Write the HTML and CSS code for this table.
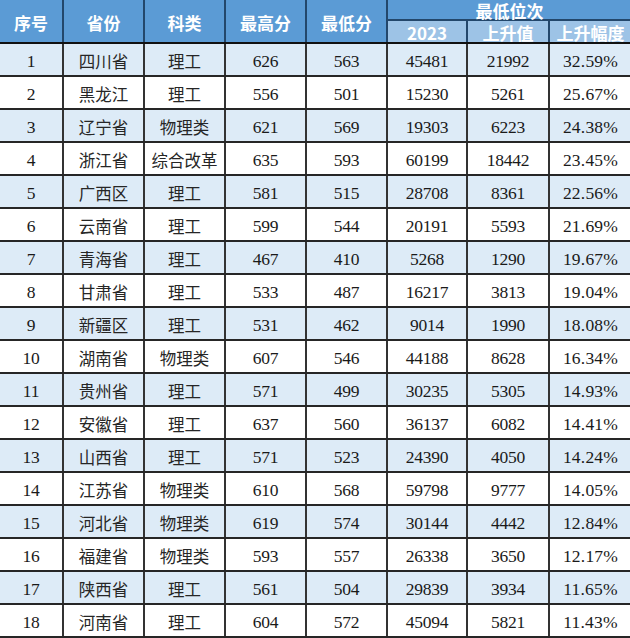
FILE: index.html
```html
<!DOCTYPE html>
<html lang="zh-CN">
<head>
<meta charset="utf-8">
<title>最低位次</title>
<link rel="stylesheet" href="styles.css">
</head>
<body>
<table class="sheet">
  <colgroup>
    <col class="c-no"><col class="c-prov"><col class="c-type"><col class="c-max"><col class="c-min"><col class="c-rank"><col class="c-up"><col class="c-pct">
  </colgroup>
  <thead>
    <tr class="h-top">
      <th rowspan="2">序号</th>
      <th rowspan="2">省份</th>
      <th rowspan="2">科类</th>
      <th rowspan="2">最高分</th>
      <th rowspan="2">最低分</th>
      <th colspan="3" class="h-group">最低位次</th>
    </tr>
    <tr class="h-sub">
      <th>2023</th>
      <th>上升值</th>
      <th>上升幅度</th>
    </tr>
  </thead>
  <tbody>
    <tr><td>1</td><td class="cn">四川省</td><td class="cn">理工</td><td>626</td><td>563</td><td>45481</td><td>21992</td><td class="pct">32.59%</td></tr>
    <tr><td>2</td><td class="cn">黑龙江</td><td class="cn">理工</td><td>556</td><td>501</td><td>15230</td><td>5261</td><td class="pct">25.67%</td></tr>
    <tr><td>3</td><td class="cn">辽宁省</td><td class="cn">物理类</td><td>621</td><td>569</td><td>19303</td><td>6223</td><td class="pct">24.38%</td></tr>
    <tr><td>4</td><td class="cn">浙江省</td><td class="cn">综合改革</td><td>635</td><td>593</td><td>60199</td><td>18442</td><td class="pct">23.45%</td></tr>
    <tr><td>5</td><td class="cn">广西区</td><td class="cn">理工</td><td>581</td><td>515</td><td>28708</td><td>8361</td><td class="pct">22.56%</td></tr>
    <tr><td>6</td><td class="cn">云南省</td><td class="cn">理工</td><td>599</td><td>544</td><td>20191</td><td>5593</td><td class="pct">21.69%</td></tr>
    <tr><td>7</td><td class="cn">青海省</td><td class="cn">理工</td><td>467</td><td>410</td><td>5268</td><td>1290</td><td class="pct">19.67%</td></tr>
    <tr><td>8</td><td class="cn">甘肃省</td><td class="cn">理工</td><td>533</td><td>487</td><td>16217</td><td>3813</td><td class="pct">19.04%</td></tr>
    <tr><td>9</td><td class="cn">新疆区</td><td class="cn">理工</td><td>531</td><td>462</td><td>9014</td><td>1990</td><td class="pct">18.08%</td></tr>
    <tr><td>10</td><td class="cn">湖南省</td><td class="cn">物理类</td><td>607</td><td>546</td><td>44188</td><td>8628</td><td class="pct">16.34%</td></tr>
    <tr><td>11</td><td class="cn">贵州省</td><td class="cn">理工</td><td>571</td><td>499</td><td>30235</td><td>5305</td><td class="pct">14.93%</td></tr>
    <tr><td>12</td><td class="cn">安徽省</td><td class="cn">理工</td><td>637</td><td>560</td><td>36137</td><td>6082</td><td class="pct">14.41%</td></tr>
    <tr><td>13</td><td class="cn">山西省</td><td class="cn">理工</td><td>571</td><td>523</td><td>24390</td><td>4050</td><td class="pct">14.24%</td></tr>
    <tr><td>14</td><td class="cn">江苏省</td><td class="cn">物理类</td><td>610</td><td>568</td><td>59798</td><td>9777</td><td class="pct">14.05%</td></tr>
    <tr><td>15</td><td class="cn">河北省</td><td class="cn">物理类</td><td>619</td><td>574</td><td>30144</td><td>4442</td><td class="pct">12.84%</td></tr>
    <tr><td>16</td><td class="cn">福建省</td><td class="cn">物理类</td><td>593</td><td>557</td><td>26338</td><td>3650</td><td class="pct">12.17%</td></tr>
    <tr><td>17</td><td class="cn">陕西省</td><td class="cn">理工</td><td>561</td><td>504</td><td>29839</td><td>3934</td><td class="pct">11.65%</td></tr>
    <tr><td>18</td><td class="cn">河南省</td><td class="cn">理工</td><td>604</td><td>572</td><td>45094</td><td>5821</td><td class="pct">11.43%</td></tr>
  </tbody>
</table>
</body>
</html>
```

FILE: styles.css
```css
html, body {
  margin: 0;
  padding: 0;
  background: #ffffff;
  overflow: hidden;
}

.sheet {
  border-collapse: collapse;
  table-layout: fixed;
  width: 631px;
}

.c-no { width: 63px; }
.c-prov { width: 81px; }
.c-type { width: 81px; }
.c-max { width: 81px; }
.c-min { width: 81px; }
.c-rank { width: 80px; }
.c-up { width: 82px; }
.c-pct { width: 82px; }

.sheet th {
  padding: 0;
  color: #ffffff;
  font-family: "Noto Sans CJK SC", "Noto Sans", sans-serif;
  font-weight: 700;
  font-size: 17px;
  line-height: 20px;
  text-align: center;
  background: #5b9bd5;
  border-left: 2px solid #23476b;
  border-bottom: 2px solid #111111;
}

.sheet th:first-child {
  border-left: 0;
}

.h-top {
  height: 20px;
}

.h-top th {
  padding-top: 4px;
}

.h-top .h-group {
  font-size: 17px;
  line-height: 17px;
  padding-top: 2px;
  vertical-align: top;
  border-bottom: 2px solid #23476b;
}

.h-sub {
  height: 23px;
}

.h-sub th {
  background: #9dc3e6;
  font-size: 17px;
  padding-top: 2px;
  line-height: 19px;
}

.h-sub th:first-child {
  border-left: 2px solid #23476b;
}

.sheet td {
  height: 29px;
  padding: 2px 0 0 0;
  text-align: center;
  color: #1a1a1a;
  font-family: "Liberation Serif", "Noto Sans CJK SC", serif;
  font-size: 17.5px;
  letter-spacing: -0.3px;
  line-height: 20px;
  border-left: 2px solid #333333;
  border-bottom: 2px solid #262626;
}

.sheet td:first-child {
  border-left: 0;
}

.sheet td.cn {
  font-family: "Noto Sans CJK SC", sans-serif;
  font-size: 16.5px;
  letter-spacing: 0;
  color: #262626;
}

.sheet td.pct {
  letter-spacing: 0.2px;
}

.sheet tbody tr:nth-child(odd) td {
  background: #ddebf7;
}

.sheet tbody tr:nth-child(even) td {
  background: #ffffff;
}
```
